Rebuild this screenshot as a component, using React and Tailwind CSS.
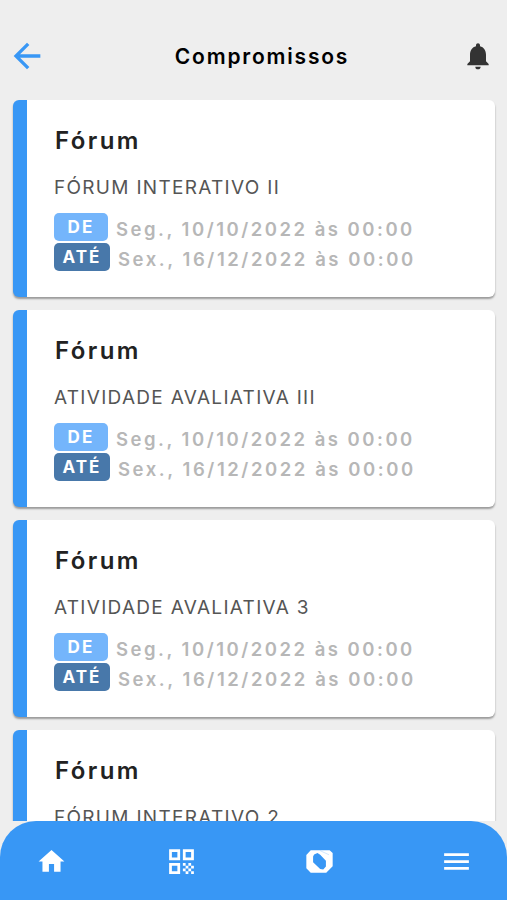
import { MdArrowBack, MdHome, MdMenu, MdNotifications, MdQrCode } from "react-icons/md";

const appointments = [
  { id: 1, type: "Fórum", title: "FÓRUM INTERATIVO II", from: "Seg., 10/10/2022 às 00:00", to: "Sex., 16/12/2022 às 00:00" },
  { id: 2, type: "Fórum", title: "ATIVIDADE AVALIATIVA III", from: "Seg., 10/10/2022 às 00:00", to: "Sex., 16/12/2022 às 00:00" },
  { id: 3, type: "Fórum", title: "ATIVIDADE AVALIATIVA 3", from: "Seg., 10/10/2022 às 00:00", to: "Sex., 16/12/2022 às 00:00" },
  { id: 4, type: "Fórum", title: "FÓRUM INTERATIVO 2", from: "Seg., 10/10/2022 às 00:00", to: "Sex., 16/12/2022 às 00:00" },
];

const BrandIcon = () => (
  <svg width="27" height="23" viewBox="0 0 80 68" fill="none">
    <path
      fill="#fff"
      fillRule="evenodd"
      d="M14 1H70L79 9V48L60 67H14L1 54V15ZM24 13L34 9L42 14L59 32V49L51 58L42 56L21 36V19Z"
    />
    <path d="M42 2L68 14" stroke="#3897f5" strokeOpacity="0.35" strokeWidth="2" />
  </svg>
);

const AppointmentCard = ({ item }) => (
  <article className="h-[197px] shrink-0 rounded-md border-l-[14px] border-[#3897f5] bg-white pl-7 shadow-[0_2px_2px_rgba(0,0,0,0.35)]">
    <h2 className="pt-[25px] text-[24px] leading-8 font-semibold tracking-[2.4px] text-[#222]">{item.type}</h2>
    <p className="-ml-px pt-[17px] text-[19px] leading-7 tracking-[1.3px] whitespace-nowrap text-[#555]">{item.title}</p>
    <div className="mt-[11px] -ml-px flex flex-col gap-0.5 text-[18.5px] font-semibold text-[#b7b7b7]">
      <div className="flex h-7 items-center">
        <span className="mr-2 flex h-7 w-[54px] items-center justify-center rounded-[5px] bg-[#74b5fb] pt-px text-[17px] leading-none font-bold tracking-[2.2px] text-white">
          DE
        </span>
        <span className="pt-1.5 tracking-[2.5px] whitespace-nowrap">{item.from}</span>
      </div>
      <div className="flex h-7 items-center">
        <span className="mr-2 flex h-7 w-14 items-center justify-center rounded-[5px] bg-[#4878aa] pt-px text-[17px] leading-none font-bold tracking-[2px] text-white">
          ATÉ
        </span>
        <span className="pt-1.5 tracking-[2.56px] whitespace-nowrap">{item.to}</span>
      </div>
    </div>
  </article>
);

const App = () => {
  return (
    <div className="flex h-screen w-full flex-col overflow-hidden bg-[#eee] font-['Inter',sans-serif]">
      {/* Header */}
      <header className="flex h-[100px] shrink-0 items-center pt-3 pr-[13px] pl-[7px]">
        <button aria-label="Voltar" className="text-[#3897f5]">
          <MdArrowBack size={40} />
        </button>
        <h1 className="flex-1 pt-px pl-[15px] text-center text-[21px] font-semibold tracking-[1.8px] text-black">
          Compromissos
        </h1>
        <button aria-label="Notificações" className="text-[#333]">
          <MdNotifications size={32} />
        </button>
      </header>

      {/* Appointments */}
      <main className="flex min-h-0 flex-1 flex-col gap-[13px] overflow-hidden pr-3 pl-[13px]">
        {appointments.map((item) => (
          <AppointmentCard key={item.id} item={item} />
        ))}
      </main>

      {/* Bottom navigation */}
      <nav className="flex h-[79px] shrink-0 items-center rounded-t-[36px] bg-[#3897f5] pt-0.5 pl-9 text-white">
        <button aria-label="Início">
          <MdHome size={31} />
        </button>
        <button aria-label="QR Code" className="ml-[98px]">
          <MdQrCode size={33} />
        </button>
        <button aria-label="Portal" className="ml-[108px]">
          <BrandIcon />
        </button>
        <button aria-label="Menu" className="ml-[107px]">
          <MdMenu size={33} />
        </button>
      </nav>
    </div>
  );
};

export default App;
